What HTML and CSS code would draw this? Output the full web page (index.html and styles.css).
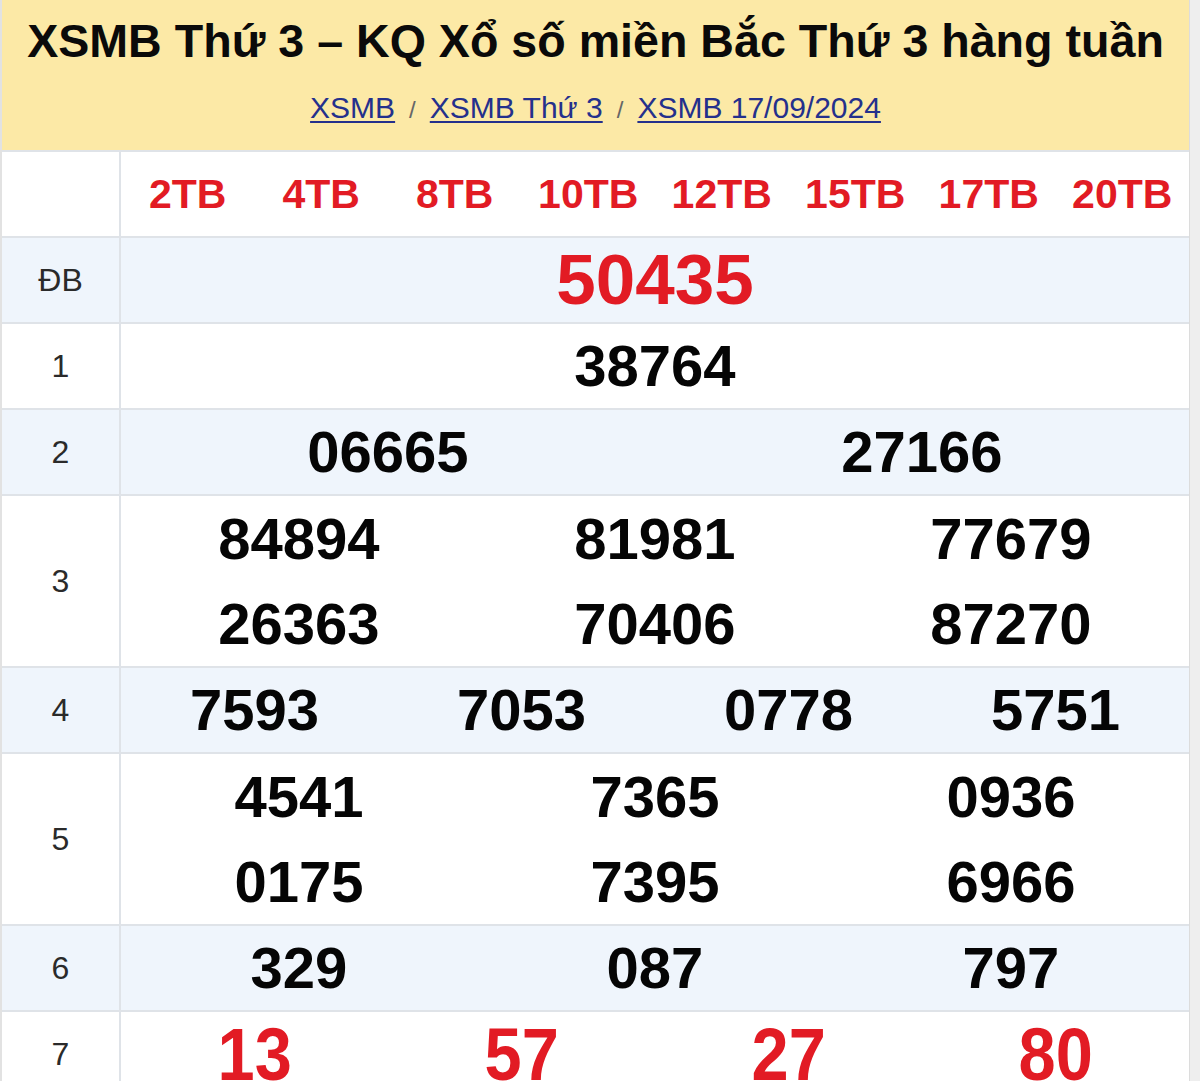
FILE: index.html
```html
<!DOCTYPE html>
<html lang="vi">
<head>
<meta charset="utf-8">
<title>XSMB Thứ 3</title>
<link rel="stylesheet" href="styles.css">
</head>
<body>
<div class="page">
  <header class="hero">
    <h1 class="title">XSMB Thứ 3 – KQ Xổ số miền Bắc Thứ 3 hàng tuần</h1>
    <nav class="crumbs">
      <a href="#">XSMB</a><span class="sep">/</span><a href="#">XSMB Thứ 3</a><span class="sep">/</span><a href="#">XSMB 17/09/2024</a>
    </nav>
  </header>
  <div class="results">
    <div class="row head">
      <div class="label"></div>
      <div class="codes">
        <span>2TB</span><span>4TB</span><span>8TB</span><span>10TB</span><span>12TB</span><span>15TB</span><span>17TB</span><span>20TB</span>
      </div>
    </div>
    <div class="row alt">
      <div class="label">ĐB</div>
      <div class="nums c1"><span class="special">50435</span></div>
    </div>
    <div class="row">
      <div class="label">1</div>
      <div class="nums c1"><span>38764</span></div>
    </div>
    <div class="row alt">
      <div class="label">2</div>
      <div class="nums c2"><span>06665</span><span>27166</span></div>
    </div>
    <div class="row">
      <div class="label">3</div>
      <div class="nums c3 two"><span>84894</span><span>81981</span><span>77679</span><span>26363</span><span>70406</span><span>87270</span></div>
    </div>
    <div class="row alt">
      <div class="label">4</div>
      <div class="nums c4"><span>7593</span><span>7053</span><span>0778</span><span>5751</span></div>
    </div>
    <div class="row">
      <div class="label">5</div>
      <div class="nums c3 two"><span>4541</span><span>7365</span><span>0936</span><span>0175</span><span>7395</span><span>6966</span></div>
    </div>
    <div class="row alt">
      <div class="label">6</div>
      <div class="nums c3"><span>329</span><span>087</span><span>797</span></div>
    </div>
    <div class="row">
      <div class="label">7</div>
      <div class="nums c4 seven"><span><b>13</b></span><span><b>57</b></span><span><b>27</b></span><span><b>80</b></span></div>
    </div>
  </div>
</div>
</body>
</html>
```

FILE: styles.css
```css
* { box-sizing: border-box; }

html, body {
  margin: 0;
  padding: 0;
  background: #eeeeee;
}

body {
  font-family: "Liberation Sans", Arial, sans-serif;
  color: #000;
}

.page {
  width: 1190px;
  background: #ffffff;
  border-left: 2px solid #e2e2e2;
  border-right: 1px solid #dcdcdc;
  min-height: 1081px;
}

.hero {
  background: #fce9a6;
  height: 150px;
  padding-top: 14px;
  text-align: center;
}

.title {
  margin: 0;
  font-size: 46.6px;
  line-height: 54px;
  font-weight: 700;
  color: #0a0a0a;
}

.crumbs {
  margin-top: 22px;
  font-size: 30px;
  line-height: 36px;
}

.crumbs a {
  color: #24308c;
  text-decoration: underline;
  text-decoration-thickness: 2px;
  text-underline-offset: 3px;
}

.crumbs .sep {
  color: #666;
  font-size: 24px;
  margin: 0 14px;
}

.results {
  border-top: 2px solid #dfe3e8;
}

.row {
  display: grid;
  grid-template-columns: 119px 1fr;
  border-bottom: 2px solid #dfe3e8;
}

.row.alt {
  background: #eff5fc;
}

.row.head {
  height: 86px;
}

.label {
  border-right: 2px solid #dfe3e8;
  display: flex;
  align-items: center;
  justify-content: center;
  font-size: 32px;
  color: #2a2a2a;
}

.codes {
  display: grid;
  grid-template-columns: repeat(8, 1fr);
  align-items: center;
  font-size: 41px;
  font-weight: 700;
  color: #e21b24;
  text-align: center;
}

.nums {
  display: grid;
  grid-auto-rows: 84px;
  font-size: 58px;
  line-height: 84px;
  font-weight: 700;
  text-align: center;
  color: #050505;
}

.nums.two {
  grid-auto-rows: 85px;
  line-height: 85px;
}

.c1 { grid-template-columns: 1fr; }
.c2 { grid-template-columns: repeat(2, 1fr); }
.c3 { grid-template-columns: repeat(3, 1fr); }
.c4 { grid-template-columns: repeat(4, 1fr); }

.nums .special {
  font-size: 71px;
  color: #e21b24;
}

.seven {
  color: #e21b24;
  font-size: 75px;
}

.seven b {
  display: inline-block;
  transform: scaleX(0.89);
}
```
